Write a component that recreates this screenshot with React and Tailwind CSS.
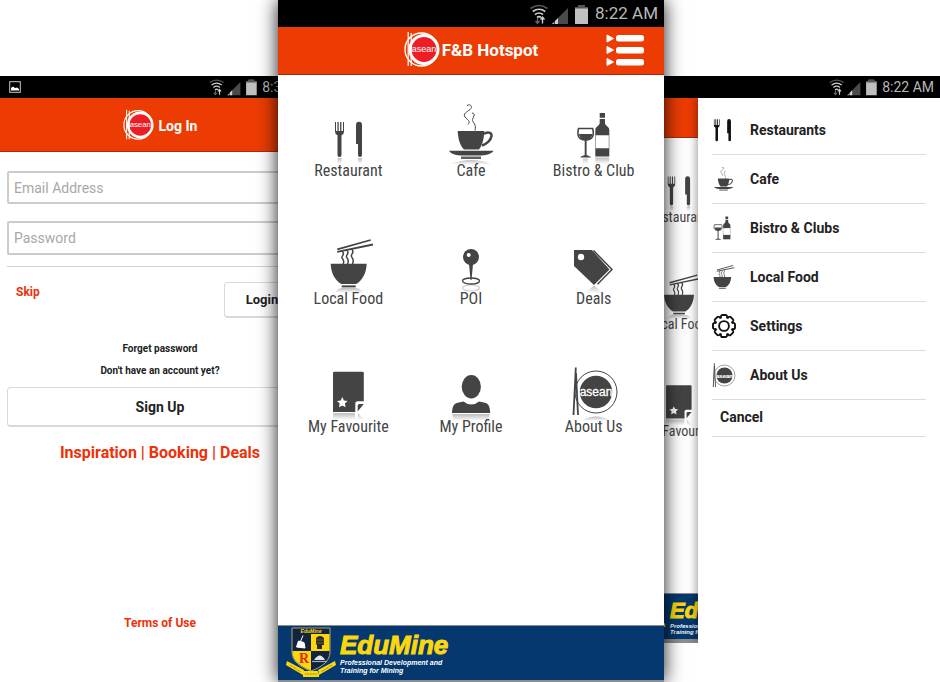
import React from "react";

const INK = "#444444";
const FADE = "url(#reflection)";

function ForkKnife({ className, ink = INK, viewBox = "0 0 64 64" }) {
  return (
    <svg viewBox={viewBox} className={className} fill={ink} aria-hidden="true">
      <path d="M19 21v9.500q0 3 2.500 3.800V54q0 2 2 2t2-2V34.300q2.500-.8 2.500-3.800V21h-1v9h-1.600v-9h-1.300v9h-1.400v-9h-1.300v9H20v-9z" />
      <path d="M40 43V24q0-3.300 3-3.300t3 3.300v30q0 2-2 2t-2-2V43z" />
      <path d="M21.500 57h4v6h-4zM42 57h4v6h-4z" fill={FADE} />
    </svg>
  );
}

function Cup({ className, viewBox = "0 0 64 64" }) {
  return (
    <svg viewBox={viewBox} className={className} fill={INK} aria-hidden="true">
      <path d="M28 4.500c4-2 6 1.500 3 4s-7.500 4.500-5 7.500 6 4 3 7.500M33 12c5 .5 0 5 .5 7.500s4 3.500 2.500 10" fill="none" stroke={INK} strokeWidth="1" />
      <path d="M18.700 30h26.600c-.3 6-1.300 13.500-5.300 18.500H25c-4.500-4-6-12-6.300-18.500z" />
      <path d="M45 33c3-2.500 8-2 7.500 2S48 43 43 44.500" fill="none" stroke={INK} strokeWidth="2.400" />
      <path d="M10 49.800h44.500c-1.500 2.700-6 4.200-12 4.700h-21c-6-.5-10-2-11.500-4.700z" />
      <path d="M22 55.500h20V58H22z" opacity=".85" />
      <path d="M10 63.500q22-9 44 0z" fill={FADE} />
    </svg>
  );
}

function Bottle({ className, viewBox = "1 0 64 64" }) {
  return (
    <svg viewBox={viewBox} className={className} fill={INK} aria-hidden="true">
      <path d="M17.500 27.600h14.200c1.500 6 .8 11.400-7.100 11.400s-8.600-5.400-7.100-11.400z" fill="none" stroke={INK} strokeWidth="1.500" />
      <path d="M18 33h13.300c-.3 3.500-2 5.600-6.700 5.600s-6.300-2.100-6.600-5.600z" />
      <path d="M23.700 38h1.900v16l4.200 1.800v.7H19.500v-.7l4.200-1.800z" />
      <path d="M38.700 12H44v4.700h-5.300zM38.700 18H44v4c0 3 4.300 3.500 4.300 7v5h-14v-5c0-3.500 4.400-4 4.400-7zM34.300 47.500h14v8h-14z" />
      <path d="M34.500 34h13.600v13.500H34.500z" fill="none" stroke={INK} strokeWidth=".5" />
      <path d="M34.300 56.500h14V63h-14zM22 57.500h5V63h-5z" fill={FADE} />
    </svg>
  );
}

function Bowl({ className, viewBox = "0 0 64 64" }) {
  return (
    <svg viewBox={viewBox} className={className} fill={INK} aria-hidden="true">
      <path d="M14.700 34.700h36c-.5 9-4 16.500-10.500 20.300H25.300C18.700 51 15 44 14.700 34.700z" />
      <path d="M25.700 56.400h14v2h-14z" />
      <path d="M21.300 20.300 54.700 11M21.300 22.800 57 15.500" stroke={INK} strokeWidth="1.800" />
      <path d="M26 22c4 3-1 5 0 7s3 3 1 6M30.500 21c4 3-1 5 0 7s3 3 1 7M35.500 20c4 3-1 5 0 7.500s3 3 1 7.500" fill="none" stroke={INK} strokeWidth="1.500" />
      <path d="M19 64q2-5 8-5h12q6 0 8 5z" fill={FADE} />
    </svg>
  );
}

function Pin({ className }) {
  return (
    <svg viewBox="0 0 64 64" className={className} fill={INK} aria-hidden="true">
      <circle cx="32" cy="28" r="8" />
      <circle cx="29.700" cy="26" r="2" fill="#ffffff" />
      <path d="M30 35h4l-1.500 16h-1z" />
      <ellipse cx="32" cy="52" rx="8.500" ry="3" fill="none" stroke={INK} strokeWidth="1.300" />
      <ellipse cx="32" cy="59" rx="8.500" ry="3" fill="none" stroke={INK} strokeWidth="1.200" opacity=".25" />
    </svg>
  );
}

function Tag({ className }) {
  return (
    <svg viewBox="1 0 64 64" className={className} fill={INK} aria-hidden="true">
      <path d="M13 21h18l17.500 19.500L33 56 13 37z" />
      <circle cx="20" cy="28" r="3.200" fill="#ffffff" />
      <path d="M32.500 21.500 51 40.500 36.500 55.300" fill="none" stroke={INK} strokeWidth="1.500" />
      <path d="M33 56.500 42 64H24z" fill={FADE} />
    </svg>
  );
}

function Favourite({ className }) {
  return (
    <svg viewBox="0 0 64 64" className={className} fill={INK} aria-hidden="true">
      <path d="M18.500 14.700h28q1.300 0 1.300 1.300v28.300h-6.300q-2.200 0-2.200 2.200V55H17V16q0-1.300 1.500-1.300z" />
      <path d="M26.300 40l1.600 3.400 3.700.5-2.700 2.600.7 3.700-3.300-1.800-3.300 1.800.7-3.700-2.700-2.600 3.700-.5z" fill="#ffffff" />
      <path d="M41.700 54.500v-5.700q0-1.800 1.800-1.800h4.200z" />
      <path d="M17 56h22v7H17zM42 56l6 7h-6z" fill={FADE} />
    </svg>
  );
}

function Profile({ className }) {
  return (
    <svg viewBox="0 0 64 64" className={className} fill={INK} aria-hidden="true">
      <ellipse cx="32.300" cy="29.700" rx="9.600" ry="11.700" />
      <path d="M13 56c.3-6 1.800-9.500 5.500-10.200l6-1.300q3.500 3 7.800 3t7.700-3l6 1.300C49.500 46.500 51 50 51.200 56z" />
      <path d="M13 57h38l-2 7H15z" fill={FADE} />
    </svg>
  );
}

function AseanMark({ className, viewBox = "1 -1 64 64" }) {
  return (
    <svg viewBox={viewBox} className={className} fill={INK} aria-hidden="true">
      <circle cx="35" cy="34" r="21" fill="#ffffff" stroke={INK} strokeWidth="1" />
      <circle cx="35" cy="34" r="16.200" />
      <path d="M14.800 9.500 12.500 57M15 15l2 42" stroke={INK} strokeWidth="1.800" />
      <text x="35" y="38" textAnchor="middle" fontSize="12" fill="#ffffff" stroke="#ffffff" strokeWidth=".3" fontFamily="Liberation Sans, Arial, sans-serif">asean</text>
      <path d="M20 63q15-9 30 0z" fill={FADE} />
    </svg>
  );
}

function Gear({ className }) {
  const teeth = [0, 45, 90, 135, 180, 225, 270, 315];
  return (
    <svg viewBox="0 0 24 24" className={className} aria-hidden="true">
      {teeth.map((a) => (
        <rect key={a} x="9" y="1" width="6" height="6" rx="1.600" fill="#ffffff" stroke="#111111" strokeWidth="1.900" transform={`rotate(${a} 12 12)`} />
      ))}
      <circle cx="12" cy="12" r="8.800" fill="#ffffff" stroke="#111111" strokeWidth="1.600" />
      {teeth.map((a) => (
        <rect key={a} x="9.900" y="2" width="4.200" height="4" fill="#ffffff" transform={`rotate(${a} 12 12)`} />
      ))}
      <circle cx="12" cy="12" r="4.900" fill="none" stroke="#111111" strokeWidth="1.900" />
    </svg>
  );
}

function Logo({ className }) {
  return (
    <svg viewBox="0 0 36 36" className={className} aria-hidden="true">
      <circle cx="17.500" cy="18.500" r="16.500" fill="none" stroke="#ffffff" strokeWidth="1.400" />
      <circle cx="20" cy="18.500" r="14" fill="#ee1c25" stroke="#ffffff" strokeWidth="3" />
      <path d="M4.200 1v34M7.200 2v33" stroke="#ffffff" strokeWidth="1.200" />
      <text x="20" y="21" textAnchor="middle" fontSize="9" fill="#ffffff" fontFamily="Liberation Sans, Arial, sans-serif">asean</text>
    </svg>
  );
}

function StatusIcons({ className }) {
  return (
    <svg viewBox="0 2 60 22" className={className} aria-hidden="true">
      <g fill="none" strokeWidth="1.600">
        <path d="M1.500 7.500q8.500-6 17 0" stroke="#555555" />
        <path d="M3.800 10.500q6.200-4.500 12.400 0M6 13.500q4-3 8 0" stroke="#d0d0d0" />
        <path d="M8 16.300q2-1.400 4 0" stroke="#d0d0d0" />
      </g>
      <path d="M8.500 17v5M6.500 20l2 2.500 2-2.500" stroke="#666666" strokeWidth="1.300" fill="none" />
      <path d="M13.500 22.500v-6M11.500 18.500l2-2.500 2 2.500" stroke="#d0d0d0" strokeWidth="1.400" fill="none" />
      <path d="M23 23h16V7z" fill="#4a4a4a" />
      <path d="M23 23h1.800v-1.800zM26 23h3v-6l-3 3z" fill="#d0d0d0" />
      <path d="M46 6h3V4h7v2h3v17H46z" fill="#c0c0c0" />
      <path d="M46 6h3V4h7v2h3v1.500H46z" fill="#555555" />
    </svg>
  );
}

function Crest({ className }) {
  return (
    <svg viewBox="0 0 50 52" className={className} aria-hidden="true">
      <path d="M6 1h38v24c0 9-8 15-19 19C14 40 6 34 6 25z" fill="#12233f" stroke="#d9c27a" strokeWidth=".8" />
      <path d="M25 7h18.500v17H25zM6.500 24H25v19.500C13 39 6.500 33 6.500 25z" fill="#fdd70e" />
      <path d="M17 8.500l-2.500 6M12.500 14l5.500 1.500 1 5.500-8.500-1z" fill="#ffffff" stroke="#ffffff" strokeWidth="1" />
      <path d="M30 11q4-4 8 0v7h-2v4h-5v-4l-1-1z" fill="#252a33" />
      <path d="M30 13h8M30 16h8" stroke="#8d7b12" strokeWidth=".7" />
      <path d="M28 33q6-9 11 0z" fill="#dfe5ea" />
      <path d="M26 34.500h15" stroke="#9fb0c4" strokeWidth="1.200" />
      <text x="18" y="36" textAnchor="middle" fontSize="14" fontWeight="700" fill="#e1261c" fontFamily="Liberation Serif, serif">R</text>
      <text x="25" y="6" textAnchor="middle" fontSize="5" fontWeight="700" fontStyle="italic" fill="#fdd70e" fontFamily="Liberation Sans, sans-serif">EduMine</text>
      <path d="M1 34l17 9-1 5L0 38zM49 34l-17 9 1 5 17-10zM17 44h16v6H17z" fill="#fdd70e" />
      <path d="M4 38l11 7M46 38l-11 7M19 47h12" stroke="#8d7b12" strokeWidth="1" strokeDasharray="1 .6" />
    </svg>
  );
}

const TILES = [
  ["Restaurant", ForkKnife],
  ["Cafe", Cup],
  ["Bistro & Club", Bottle],
  ["Local Food", Bowl],
  ["POI", Pin],
  ["Deals", Tag],
  ["My Favourite", Favourite],
  ["My Profile", Profile],
  ["About Us", AseanMark],
];

const FIRST_COLUMN = TILES.filter((_, i) => i % 3 === 0);

function LoginPhone() {
  return (
    <section className="mt-[76px] -mr-[42px] min-w-0">
      <div className="flex h-[22px] items-center justify-end bg-black pr-[6px]">
        <svg viewBox="0 0 12 12" className="mr-auto ml-[9px] size-3" aria-hidden="true">
          <rect x=".7" y=".7" width="10.600" height="10.600" fill="none" stroke="#c8c8c8" strokeWidth="1" />
          <path d="M2 9.500V7l2-1.500L6 7l2-.5 2 1.500v1.500z" fill="#ffffff" />
        </svg>
        <StatusIcons className="h-[18px] w-[50px]" />
        <span className="ml-1 text-sm text-[#b8b8b8]">8:35 AM</span>
      </div>
      <header className="flex h-[54px] items-center justify-center gap-[5px] border-b border-[#a82a10] bg-[#ec3c04] text-white">
        <Logo className="size-[31px]" />
        <h2 className="pt-0.5 text-sm font-bold">Log In</h2>
      </header>
      <form className="flex flex-col px-[7px] pt-[19px]" onSubmit={(e) => e.preventDefault()}>
        <input type="email" aria-label="Email Address" placeholder="Email Address" className="h-[33px] rounded-xs border-2 border-[#cccccc] px-[5px] text-sm placeholder:text-[#a8a8a8]" />
        <input type="password" aria-label="Password" placeholder="Password" className="mt-[17px] h-[34px] rounded-xs border-2 border-[#cccccc] px-[5px] text-sm placeholder:text-[#a8a8a8]" />
        <hr className="mt-[11px] border-[#d2d2d2]" />
        <div className="flex items-start justify-between pt-[15px] pr-[13px] pl-[9px]">
          <a href="#skip" className="text-xs leading-5 font-bold text-[#ee3107]">Skip</a>
          <button type="submit" className="h-9 w-[76px] rounded-sm border border-b-2 border-[#d9d9d9] text-[13px] font-bold text-[#222]">Login</button>
        </div>
        <div className="mt-[21px] flex flex-col items-center gap-0.5 text-[10px] leading-5 font-bold text-[#222]">
          <a href="#forget">Forget password</a>
          <p>Don't have an account yet?</p>
        </div>
        <button type="button" className="mt-1.5 h-10 rounded-sm border border-b-2 border-[#d9d9d9] text-sm font-bold text-[#222]">Sign Up</button>
      </form>
      <p className="mt-3.5 text-center text-base leading-6 font-bold text-[#ee3107]">Inspiration | Booking | Deals</p>
      <p className="mt-[148px] text-center text-xs leading-5 font-bold text-[#ee3107]">
        <a href="#terms">Terms of Use</a>
      </p>
    </section>
  );
}

function HomePhone() {
  return (
    <main className="relative z-10 flex min-h-screen flex-col bg-white shadow-[0_0_18px_rgba(0,0,0,0.9)]">
      <div className="flex h-[27px] items-center justify-end gap-1.5 bg-black pr-1.5">
        <StatusIcons className="h-[22px] w-[60px]" />
        <span className="text-[17px] text-[#b8b8b8]">8:22 AM</span>
      </div>
      <header className="grid h-12 grid-cols-[1fr_auto_1fr] items-center border-b border-[#a82a10] bg-[#ec3c04] text-white">
        <span />
        <div className="flex items-center">
          <Logo className="mb-1 size-9" />
          <h1 className="ml-0.5 text-[17px] font-bold">F&amp;B Hotspot</h1>
        </div>
        <button type="button" aria-label="Menu" className="mr-5 justify-self-end">
          <svg viewBox="0 0 38 32" className="mb-0.5 h-8 w-[38px]" fill="#ffffff" aria-hidden="true">
            <path d="M1 1l6.500 3.500L1 8zM1 12.500l6.500 3.500L1 19.500zM1 24.500l6.500 3.500L1 31.500z" stroke="#ffffff" strokeLinejoin="round" />
            <rect x="10" y="1" width="28" height="6.500" rx="2.500" />
            <rect x="10" y="13" width="28" height="6.500" rx="2.500" />
            <rect x="10" y="25" width="28" height="6.500" rx="2.500" />
          </svg>
        </button>
      </header>
      <nav className="grid grid-cols-3 gap-y-12 px-[9px] pt-[26px]">
        {TILES.map(([name, Icon]) => (
          <a key={name} href="#home" className="flex flex-col items-center">
            <Icon className="size-16" />
            <span className="relative -mt-1 font-['Liberation_Sans_Narrow','Roboto_Condensed','Liberation_Sans',sans-serif] text-base leading-5 whitespace-nowrap text-[#444]">{name}</span>
          </a>
        ))}
      </nav>
      <footer className="mt-auto flex h-[57px] items-center border-t border-b-2 border-[#8d8d8d] bg-[#04386f] pl-2">
        <Crest className="h-[52px] w-[50px]" />
        <div className="ml-1 font-['Liberation_Sans',sans-serif] font-bold italic">
          <p className="text-[26px] leading-7 text-[#fdd70e] [-webkit-text-stroke:1px_#fdd70e]">EduMine</p>
          <p className="text-[7px] leading-2 text-white">Professional Development and<br />Training for Mining</p>
        </div>
      </footer>
    </main>
  );
}

const MENU = [
  ["Restaurants", <ForkKnife className="size-6" viewBox="16 19 38 38" ink="#111111" />],
  ["Cafe", <Cup className="size-6" viewBox="6 3 54 56" />],
  ["Bistro & Clubs", <Bottle className="size-6" viewBox="13 11 46 46" />],
  ["Local Food", <Bowl className="size-6" viewBox="12 10 48 49" />],
  ["Settings", <Gear className="size-6" />],
  ["About Us", <AseanMark className="size-6" viewBox="10 9 48 48" />],
];

function MenuPhone() {
  return (
    <section className="mt-[76px] -ml-[44px] flex h-[567px] min-w-0 flex-col">
      <div className="flex h-[22px] items-center justify-end bg-black pr-[6px]">
        <StatusIcons className="h-[18px] w-[50px]" />
        <span className="ml-1 text-sm text-[#b8b8b8]">8:22 AM</span>
      </div>
      <div className="grid flex-1 grid-cols-[78px_1fr] overflow-hidden">
        <div className="flex flex-col overflow-hidden">
          <div className="h-10 shrink-0 border-b border-[#a82a10] bg-[#ec3c04]" />
          <div className="ml-[7px] flex w-[102px] flex-col gap-10 pt-[21px]">
            {FIRST_COLUMN.map(([name, Icon]) => (
              <div key={name} className="flex flex-col items-center">
                <Icon className="size-[53px]" />
                <span className="relative -mt-[3px] font-['Liberation_Sans_Narrow','Roboto_Condensed','Liberation_Sans',sans-serif] text-sm leading-[17px] whitespace-nowrap text-[#444]">{name}</span>
              </div>
            ))}
          </div>
          <div className="mt-auto flex h-[50px] w-[320px] items-center border-t border-b-4 border-[#8d8d8d] bg-[#04386f] pl-1">
            <Crest className="h-[43px] w-[42px]" />
            <div className="ml-1 font-['Liberation_Sans',sans-serif] font-bold italic">
              <p className="text-[22px] leading-6 text-[#fdd70e] [-webkit-text-stroke:1px_#fdd70e]">EduMine</p>
              <p className="text-[6px] leading-1.5 text-white">Professional Development and<br />Training for Mining</p>
            </div>
          </div>
        </div>
        <nav className="bg-white px-3.5 pt-2 text-sm font-bold text-[#222] shadow-[-2px_0_8px_rgba(0,0,0,0.35)]">
          <ul>
            {MENU.map(([name, icon]) => (
              <li key={name} className="h-[49px] border-b border-[#dcdcdc]">
                <a href="#menu" className="flex h-full items-center gap-3.5">
                  {icon}
                  {name}
                </a>
              </li>
            ))}
            <li className="h-[37px] border-b border-[#dcdcdc]">
              <button type="button" className="flex h-full items-start px-2 pt-[7px]">Cancel</button>
            </li>
          </ul>
        </nav>
      </div>
    </section>
  );
}

export default function App() {
  return (
    <div className="grid min-h-screen grid-cols-[278fr_386fr_276fr] overflow-hidden bg-white font-['Roboto',sans-serif]">
      <LoginPhone />
      <HomePhone />
      <MenuPhone />
      <svg className="absolute size-0" aria-hidden="true">
        <linearGradient id="reflection" x1="0" y1="0" x2="0" y2="1">
          <stop offset="0" stopColor="#444444" stopOpacity=".35" />
          <stop offset="1" stopColor="#444444" stopOpacity="0" />
        </linearGradient>
      </svg>
    </div>
  );
}
